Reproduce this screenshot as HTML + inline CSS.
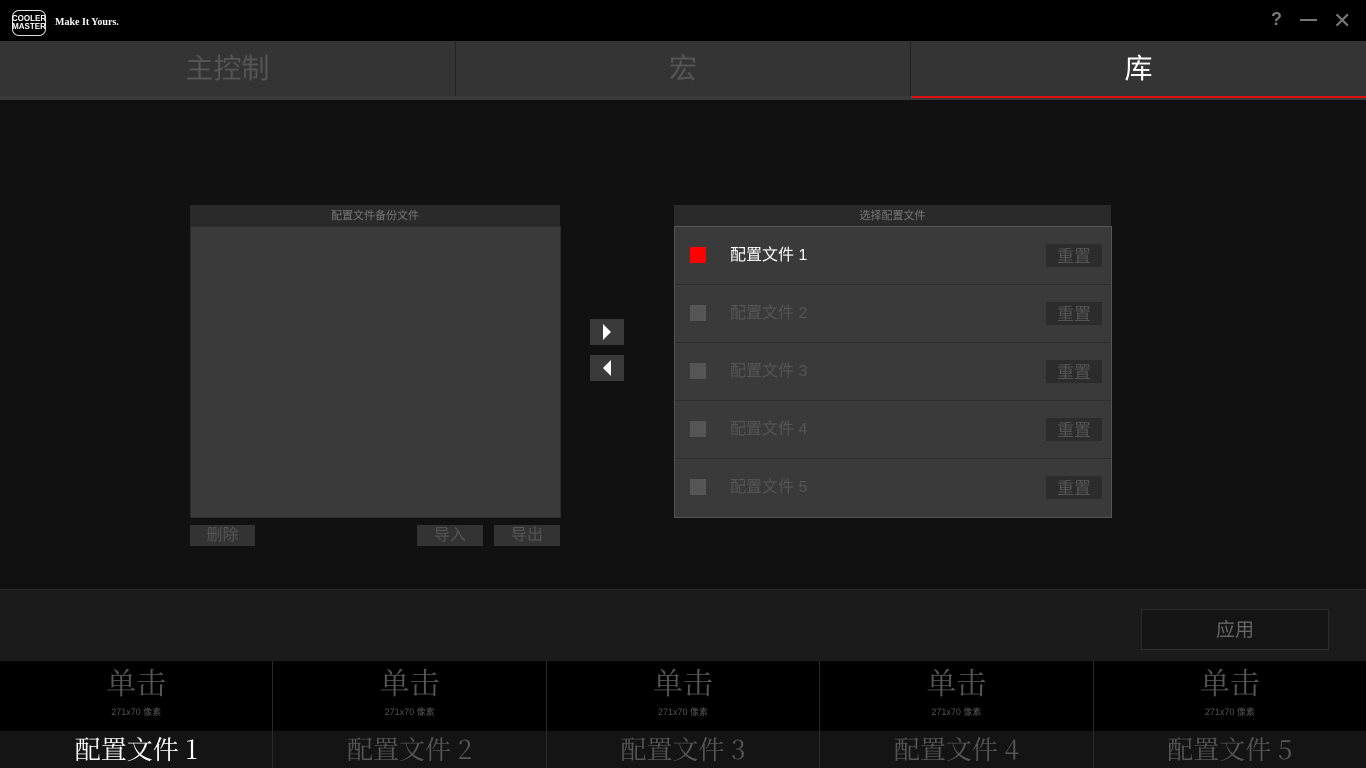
<!DOCTYPE html><html><head><meta charset="utf-8"><style>
*{margin:0;padding:0;box-sizing:border-box}
body{width:1366px;height:768px;background:#121112;font-family:"Liberation Sans","Noto Sans CJK SC",sans-serif;position:relative;overflow:hidden;color:#666}
.a{position:absolute}
.c{display:flex;align-items:center;justify-content:center}
.b{line-height:1;padding-top:1px}
.cell{flex:1;border-right:1px solid #2a2a2a}
.top{height:70px;background:#000;display:flex;flex-direction:column;align-items:center;padding-top:2px}
.top .t{font-size:30px;color:#555;font-family:'Noto Serif CJK SC',serif;line-height:36px}
.top .s{font-size:9px;color:#555;margin-top:8px;line-height:11px}
.lab{height:37px;background:#141414;font-size:26px;color:#555;font-family:'Noto Serif CJK SC',serif;display:flex;align-items:center;justify-content:center;line-height:1;padding-bottom:2px}
</style></head><body>
<div class="a" style="left:0;top:0;width:1366px;height:41px;background:#000"></div>
<div class="a c" style="left:12px;top:10px;width:34px;height:26px;border:1.5px solid #ddd;border-radius:7px;color:#fff;font-size:8px;font-weight:bold;line-height:8px;text-align:center;flex-direction:column">COOLER<br>MASTER</div>
<div class="a" style="left:55px;top:17px;color:#fff;font-family:'Liberation Serif',serif;font-weight:bold;font-size:10px">Make It Yours.</div>
<div class="a" style="left:1271px;top:9px;color:#777;font-size:18px;font-weight:bold">?</div>
<div class="a" style="left:1300px;top:19px;width:17px;height:2px;background:#777"></div>
<div class="a" style="left:1333px;top:8px;color:#777;font-size:22px">✕</div>
<div class="a" style="left:0;top:41px;width:1366px;height:55px;background:#343434"></div>
<div class="a" style="left:455px;top:41px;width:1px;height:55px;background:#222"></div>
<div class="a" style="left:910px;top:41px;width:1px;height:55px;background:#222"></div>
<div class="a c b" style="left:0;top:41px;width:455px;height:55px;font-size:28px;color:#555">主控制</div>
<div class="a c b" style="left:456px;top:41px;width:454px;height:55px;font-size:28px;color:#555">宏</div>
<div class="a c b" style="left:911px;top:41px;width:455px;height:55px;font-size:28px;color:#fff">库</div>
<div class="a" style="left:0;top:96px;width:1366px;height:4px;background:#3a3a3a"></div>
<div class="a" style="left:911px;top:96px;width:455px;height:2px;background:#e01010"></div>
<!-- left panel -->
<div class="a c b" style="left:190px;top:205px;width:370px;height:21px;background:#2a2a2a;font-size:11px;color:#777">配置文件备份文件</div>
<div class="a" style="left:190px;top:226px;width:371px;height:292px;background:#3a3a3a;border:1px solid #2c2c2c"></div>
<div class="a c b" style="left:190px;top:525px;width:65px;height:21px;background:#333;font-size:16px;color:#555">删除</div>
<div class="a c b" style="left:417px;top:525px;width:66px;height:21px;background:#333;font-size:16px;color:#555">导入</div>
<div class="a c b" style="left:494px;top:525px;width:66px;height:21px;background:#333;font-size:16px;color:#555">导出</div>
<!-- arrows -->
<div class="a" style="left:590px;top:319px;width:34px;height:26px;background:#3a3a3a"></div>
<div class="a" style="left:603px;top:324px;border-left:8px solid #fff;border-top:8px solid transparent;border-bottom:8px solid transparent"></div>
<div class="a" style="left:590px;top:355px;width:34px;height:26px;background:#3a3a3a"></div>
<div class="a" style="left:603px;top:360px;border-right:8px solid #fff;border-top:8px solid transparent;border-bottom:8px solid transparent"></div>
<!-- right panel -->
<div class="a c b" style="left:674px;top:205px;width:437px;height:21px;background:#2a2a2a;font-size:11px;color:#777">选择配置文件</div>
<div class="a" style="left:674px;top:226px;width:438px;height:292px;background:#3a3a3a;border:1px solid #555"></div>
<div class="a" style="left:675px;top:227px;width:436px">
 <div style="height:58px;border-bottom:1px solid #2e2e2e;position:relative"><div class="a" style="left:15px;top:20px;width:16px;height:16px;background:#f00"></div><div class="a" style="left:55px;top:21px;font-size:16px;line-height:16px;color:#fff">配置文件 1</div><div class="a c b" style="left:371px;top:17px;width:56px;height:23px;background:#2c2c2c;font-size:17px;color:#555">重置</div></div>
 <div style="height:58px;border-bottom:1px solid #2e2e2e;position:relative"><div class="a" style="left:15px;top:20px;width:16px;height:16px;background:#555"></div><div class="a" style="left:55px;top:21px;font-size:16px;line-height:16px;color:#555">配置文件 2</div><div class="a c b" style="left:371px;top:17px;width:56px;height:23px;background:#2c2c2c;font-size:17px;color:#555">重置</div></div>
 <div style="height:58px;border-bottom:1px solid #2e2e2e;position:relative"><div class="a" style="left:15px;top:20px;width:16px;height:16px;background:#555"></div><div class="a" style="left:55px;top:21px;font-size:16px;line-height:16px;color:#555">配置文件 3</div><div class="a c b" style="left:371px;top:17px;width:56px;height:23px;background:#2c2c2c;font-size:17px;color:#555">重置</div></div>
 <div style="height:58px;border-bottom:1px solid #2e2e2e;position:relative"><div class="a" style="left:15px;top:20px;width:16px;height:16px;background:#555"></div><div class="a" style="left:55px;top:21px;font-size:16px;line-height:16px;color:#555">配置文件 4</div><div class="a c b" style="left:371px;top:17px;width:56px;height:23px;background:#2c2c2c;font-size:17px;color:#555">重置</div></div>
 <div style="height:58px;position:relative"><div class="a" style="left:15px;top:20px;width:16px;height:16px;background:#555"></div><div class="a" style="left:55px;top:21px;font-size:16px;line-height:16px;color:#555">配置文件 5</div><div class="a c b" style="left:371px;top:17px;width:56px;height:23px;background:#2c2c2c;font-size:17px;color:#555">重置</div></div>
</div>
<!-- footer -->
<div class="a" style="left:0;top:589px;width:1366px;height:72px;background:#1b1b1b;border-top:1px solid #2a2a2a"></div>
<div class="a c b" style="left:1141px;top:609px;width:188px;height:41px;background:#151515;border:1px solid #2c2c2c;font-size:19px;color:#666">应用</div>
<!-- bottom -->
<div class="a" style="left:0;top:661px;width:1366px;height:107px;display:flex">
<div class="cell"><div class="top"><div class="t">单击</div><div class="s">271x70 像素</div></div><div class="lab" style="color:#fff">配置文件 1</div></div>
<div class="cell"><div class="top"><div class="t">单击</div><div class="s">271x70 像素</div></div><div class="lab">配置文件 2</div></div>
<div class="cell"><div class="top"><div class="t">单击</div><div class="s">271x70 像素</div></div><div class="lab">配置文件 3</div></div>
<div class="cell"><div class="top"><div class="t">单击</div><div class="s">271x70 像素</div></div><div class="lab">配置文件 4</div></div>
<div class="cell" style="border-right:0"><div class="top"><div class="t">单击</div><div class="s">271x70 像素</div></div><div class="lab">配置文件 5</div></div>
</div>
</body></html>
